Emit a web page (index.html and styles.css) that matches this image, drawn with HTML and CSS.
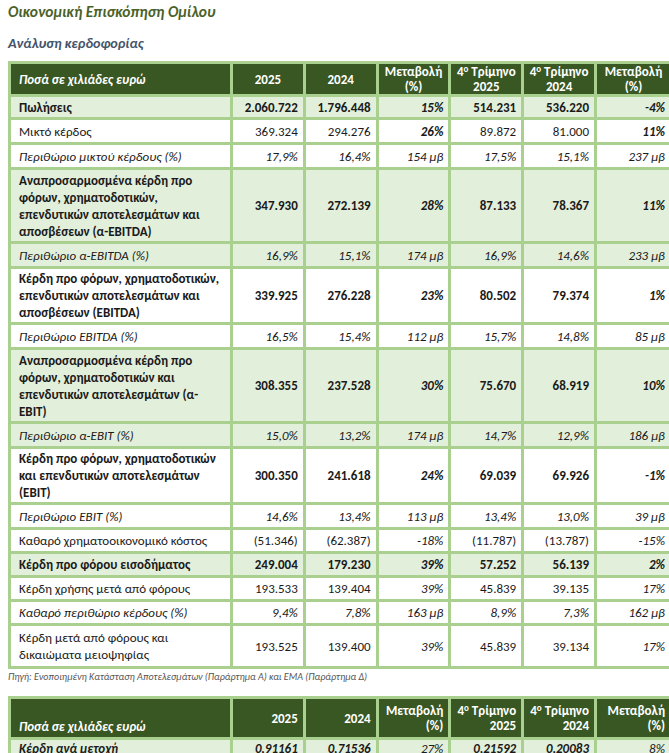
FILE: index.html
```html
<!DOCTYPE html>
<html lang="el">
<head>
<meta charset="utf-8">
<link rel="stylesheet" href="styles.css">
</head>
<body>
<h1 class="title">Οικονομική Επισκόπηση Ομίλου</h1>
<h2 class="subtitle">Ανάλυση κερδοφορίας</h2>
<table class="fin">
<colgroup><col class="c-label"><col class="c-num"><col class="c-num"><col class="c-num"><col class="c-num"><col class="c-num"><col class="c-last"></colgroup>
<thead>
<tr class="head"><th class="lab">Ποσά σε χιλιάδες ευρώ</th><th>2025</th><th>2024</th><th>Μεταβολή<br>(%)</th><th>4<sup>ο</sup> Τρίμηνο<br>2025</th><th>4<sup>ο</sup> Τρίμηνο<br>2024</th><th>Μεταβολή<br>(%)</th></tr>
</thead>
<tbody>
<tr class="g b h1"><td>Πωλήσεις</td><td>2.060.722</td><td>1.796.448</td><td class="bi">15%</td><td>514.231</td><td>536.220</td><td class="bi">-4%</td></tr>
<tr class="h2"><td>Μικτό κέρδος</td><td>369.324</td><td>294.276</td><td class="bi">26%</td><td>89.872</td><td>81.000</td><td class="bi">11%</td></tr>
<tr class="i h3"><td>Περιθώριο μικτού κέρδους (%)</td><td>17,9%</td><td>16,4%</td><td>154 μβ</td><td>17,5%</td><td>15,1%</td><td>237 μβ</td></tr>
<tr class="g b h4"><td>Αναπροσαρμοσμένα κέρδη προ<br>φόρων, χρηματοδοτικών,<br>επενδυτικών αποτελεσμάτων και<br>αποσβέσεων (α-EBITDA)</td><td>347.930</td><td>272.139</td><td class="bi">28%</td><td>87.133</td><td>78.367</td><td class="bi">11%</td></tr>
<tr class="g i h3"><td>Περιθώριο α-EBITDA (%)</td><td>16,9%</td><td>15,1%</td><td>174 μβ</td><td>16,9%</td><td>14,6%</td><td>233 μβ</td></tr>
<tr class="b h5"><td>Κέρδη προ φόρων, χρηματοδοτικών,<br>επενδυτικών αποτελεσμάτων και<br>αποσβέσεων (EBITDA)</td><td>339.925</td><td>276.228</td><td class="bi">23%</td><td>80.502</td><td>79.374</td><td class="bi">1%</td></tr>
<tr class="i h3"><td>Περιθώριο EBITDA (%)</td><td>16,5%</td><td>15,4%</td><td>112 μβ</td><td>15,7%</td><td>14,8%</td><td>85 μβ</td></tr>
<tr class="g b h4"><td>Αναπροσαρμοσμένα κέρδη προ<br>φόρων, χρηματοδοτικών και<br>επενδυτικών αποτελεσμάτων (α-<br>EBIT)</td><td>308.355</td><td>237.528</td><td class="bi">30%</td><td>75.670</td><td>68.919</td><td class="bi">10%</td></tr>
<tr class="g i h3"><td>Περιθώριο α-EBIT (%)</td><td>15,0%</td><td>13,2%</td><td>174 μβ</td><td>14,7%</td><td>12,9%</td><td>186 μβ</td></tr>
<tr class="b h5"><td>Κέρδη προ φόρων, χρηματοδοτικών<br>και επενδυτικών αποτελεσμάτων<br>(EBIT)</td><td>300.350</td><td>241.618</td><td class="bi">24%</td><td>69.039</td><td>69.926</td><td class="bi">-1%</td></tr>
<tr class="i h3"><td>Περιθώριο EBIT (%)</td><td>14,6%</td><td>13,4%</td><td>113 μβ</td><td>13,4%</td><td>13,0%</td><td>39 μβ</td></tr>
<tr class="h6"><td>Καθαρό χρηματοοικονομικό κόστος</td><td>(51.346)</td><td>(62.387)</td><td class="it">-18%</td><td>(11.787)</td><td>(13.787)</td><td class="it">-15%</td></tr>
<tr class="g b h6"><td>Κέρδη προ φόρου εισοδήματος</td><td>249.004</td><td>179.230</td><td class="bi">39%</td><td>57.252</td><td>56.139</td><td class="bi">2%</td></tr>
<tr class="h6"><td>Κέρδη χρήσης μετά από φόρους</td><td>193.533</td><td>139.404</td><td class="it">39%</td><td>45.839</td><td>39.135</td><td class="it">17%</td></tr>
<tr class="i h6"><td>Καθαρό περιθώριο κέρδους (%)</td><td>9,4%</td><td>7,8%</td><td>163 μβ</td><td>8,9%</td><td>7,3%</td><td>162 μβ</td></tr>
<tr class="h7"><td>Κέρδη μετά από φόρους και<br>δικαιώματα μειοψηφίας</td><td>193.525</td><td>139.400</td><td class="it">39%</td><td>45.839</td><td>39.134</td><td class="it">17%</td></tr>
</tbody>
</table>
<p class="source">Πηγή: Ενοποιημένη Κατάσταση Αποτελεσμάτων (Παράρτημα Α) και ΕΜΑ (Παράρτημα Δ)</p>
<table class="fin fin2">
<colgroup><col class="c-label"><col class="c-num"><col class="c-num"><col class="c-num"><col class="c-num"><col class="c-num"><col class="c-last"></colgroup>
<thead>
<tr class="head head2"><th class="lab">Ποσά σε χιλιάδες ευρώ</th><th>2025</th><th>2024</th><th>Μεταβολή<br>(%)</th><th>4<sup>ο</sup> Τρίμηνο<br>2025</th><th>4<sup>ο</sup> Τρίμηνο<br>2024</th><th>Μεταβολή<br>(%)</th></tr>
</thead>
<tbody>
<tr class="g b i h8"><td>Κέρδη ανά μετοχή</td><td>0,91161</td><td>0,71536</td><td class="it">27%</td><td>0,21592</td><td>0,20083</td><td class="it">8%</td></tr>
</tbody>
</table>
</body>
</html>
```
FILE: styles.css
```css
html, body { overflow: hidden; }
body {
  margin: 0;
  padding: 0 0 0 8px;
  width: 700px;
  font-family: Carlito, "Liberation Sans", sans-serif;
  color: #1a1a1a;
  background: #fff;
}
.title {
  margin: 0;
  padding-top: 3px;
  font-size: 15.5px;
  line-height: 18px;
  font-weight: 700;
  font-style: italic;
  color: #4a6128;
}
.subtitle {
  margin: 0;
  padding-top: 13px;
  font-size: 14.2px;
  line-height: 18px;
  font-weight: 700;
  font-style: italic;
  color: #44546a;
}
.fin {
  margin-top: 9px;
  border-collapse: collapse;
  table-layout: fixed;
  width: 662px;
  font-size: 13px;
}
.c-label { width: 222px; }
.c-num { width: 72.8px; }
.c-last { width: 76px; }
.fin th, .fin td {
  border: 3px solid #a9d08e;
  padding: 0 5px 0 7px;
  text-align: right;
  vertical-align: middle;
  line-height: 17px;
  white-space: nowrap;
}
.fin td:first-child { text-align: left; padding-left: 8px; }
.head th {
  background: #385723;
  color: #fff;
  font-weight: 700;
  text-align: center;
  height: 29px;
  line-height: 15px;
  padding: 0 2px;
}
.head th sup { font-size: 9px; vertical-align: 4px; line-height: 0; }
.head th.lab { text-align: left; font-style: italic; padding-left: 8px; }
.g td { background: #e2efda; }
.b td { font-weight: 700; }
.i td { font-style: italic; }
.fin td.bi { font-weight: 700; font-style: italic; }
.fin td.it { font-style: italic; font-weight: 400; }
.h1 td { height: 20px; }
.h2 td { height: 22px; }
.h3 td { height: 22px; }
.h4 td { height: 71px; }
.h5 td { height: 53px; }
.h6 td { height: 21px; }
.h7 td { height: 40px; }
.h8 td { height: 15px; }
.source {
  margin: 2px 0 0 0;
  font-size: 10px;
  line-height: 12px;
  font-style: italic;
  color: #555;
}
.fin2 { margin-top: 13px; }
.fin2 .head2 th { text-align: right; height: 35px; padding-right: 5px; }
.fin2 .head2 th.lab { text-align: left; vertical-align: bottom; padding-bottom: 3px; }
.fin2 .h8 td { font-weight: 700; font-style: italic; }
.fin2 .h8 td.it { font-weight: 400; }
```
